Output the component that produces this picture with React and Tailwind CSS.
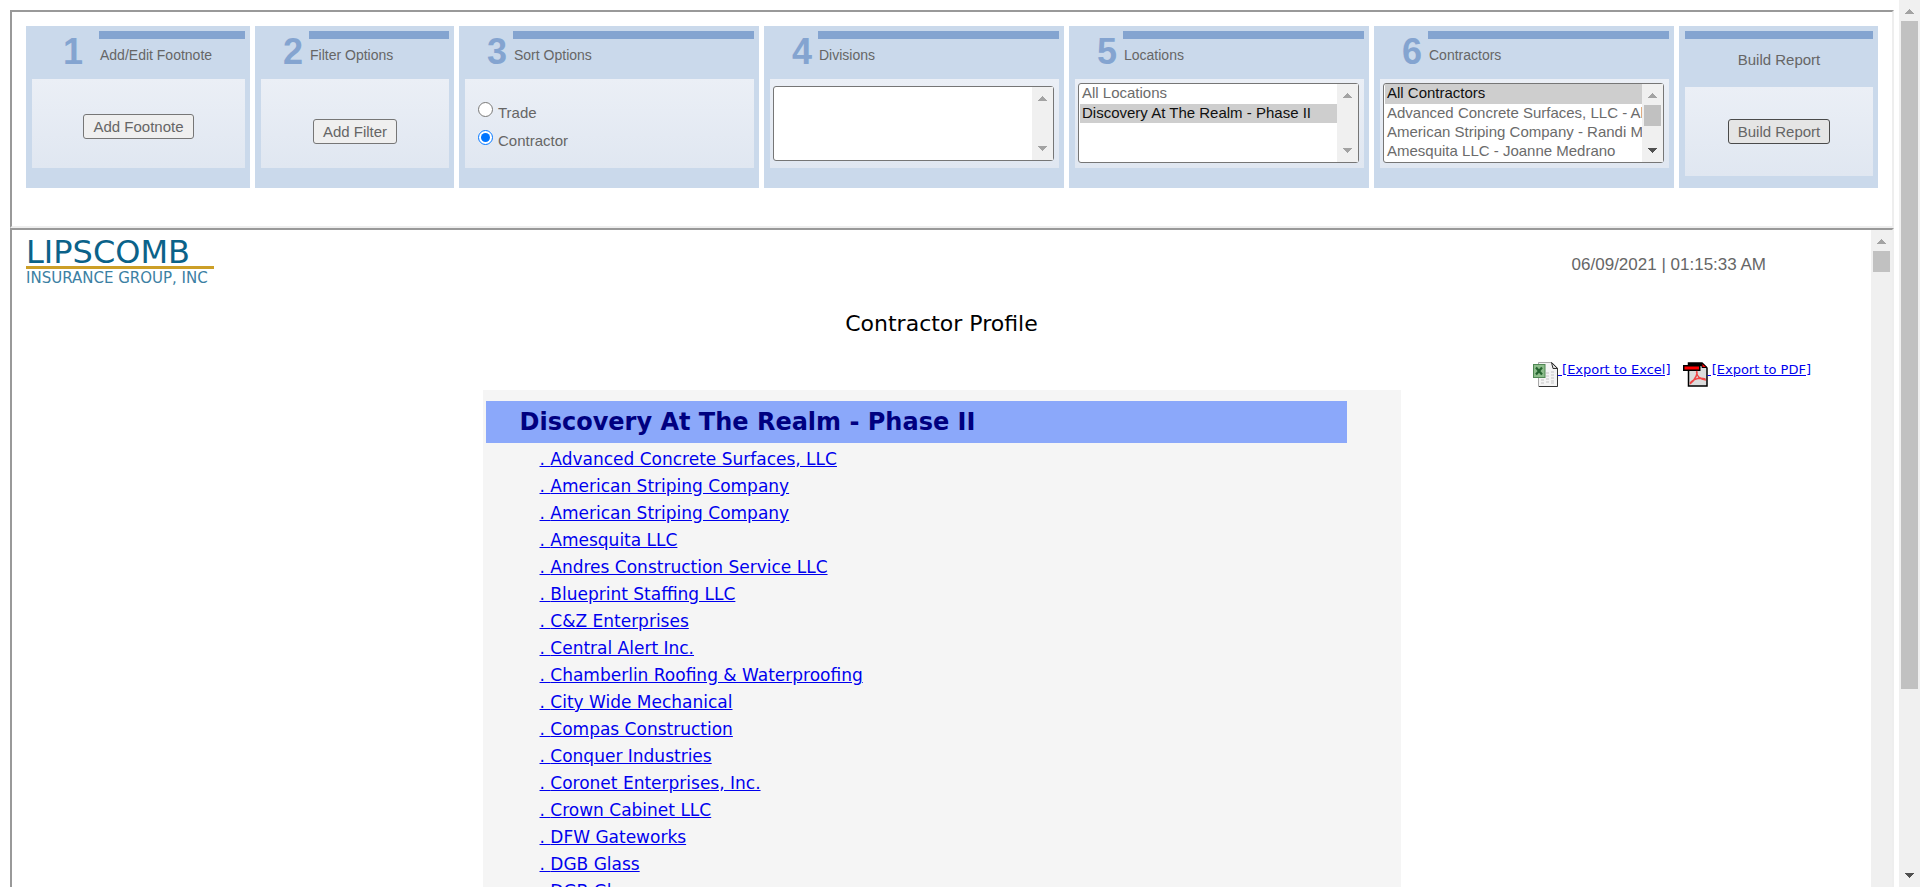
const contractors = [
  "Advanced Concrete Surfaces, LLC",
  "American Striping Company",
  "American Striping Company",
  "Amesquita LLC",
  "Andres Construction Service LLC",
  "Blueprint Staffing LLC",
  "C&Z Enterprises",
  "Central Alert Inc.",
  "Chamberlin Roofing & Waterproofing",
  "City Wide Mechanical",
  "Compas Construction",
  "Conquer Industries",
  "Coronet Enterprises, Inc.",
  "Crown Cabinet LLC",
  "DFW Gateworks",
  "DGB Glass",
  "DGB Glass",
];

function Arrow({ down, active }) {
  return (
    <svg
      width="9"
      height="5"
      viewBox="0 0 9 5"
      shapeRendering="crispEdges"
      className={active ? "text-[#505050]" : "text-[#a3a3a3]"}
      aria-hidden="true"
    >
      <path d={down ? "M0 0H9L4.5 5Z" : "M0 5H9L4.5 0Z"} fill="currentColor" />
    </svg>
  );
}

function ScrollTrack({ children, downActive, openEnd }) {
  return (
    <div className="flex w-[21px] shrink-0 flex-col items-center bg-[#f0f0f0] py-[9px]" aria-hidden="true">
      <Arrow />
      <div className="flex min-h-0 w-[17px] flex-1 flex-col py-[7px]">{children}</div>
      {!openEnd && <Arrow down active={downActive} />}
    </div>
  );
}

function Step({ number, title, wide, children }) {
  return (
    <section className="flex h-[162px] min-w-0 flex-col bg-[#cad9eb] pt-[5px] pr-[5px] pl-[6px]">
      <div className="flex h-[48px]">
        <div
          className={
            wide
              ? "w-[67px] shrink-0 pr-[16px] text-right text-[36px] leading-[42px] font-bold text-[#84a4d0]"
              : "w-[48px] shrink-0 pr-[6px] text-right text-[36px] leading-[42px] font-bold text-[#84a4d0]"
          }
        >
          {number}
        </div>
        <div className="min-w-0 flex-1">
          <div className="h-2 bg-[#84a4d0]" />
          <h2 className="truncate pt-[6px] pl-px text-[14px] leading-5">{title}</h2>
        </div>
      </div>
      <div className="h-[89px] bg-linear-to-b from-[#ebeff6] to-[#e0e7f1]">{children}</div>
    </section>
  );
}

function ListBox({ label, options, selected, height, thumb, downActive }) {
  return (
    <div className={`${height} flex rounded-[3px] border border-[#767676] bg-white`}>
      <select
        multiple
        size={4}
        aria-label={label}
        defaultValue={selected}
        className="h-full min-w-0 flex-1 overflow-hidden pl-px text-[15px] text-[#6b6b6b] outline-none [scrollbar-width:none]"
      >
        {options.map((o) => (
          <option key={o} value={o} className="h-[19px] px-[2px] leading-[19px] first:h-5">
            {o}
          </option>
        ))}
      </select>
      <ScrollTrack downActive={downActive}>{thumb}</ScrollTrack>
    </div>
  );
}

const buttonClass =
  "h-[25px] rounded-[3px] border border-[#767676] bg-[#efefef] px-[9px] text-[15px] leading-[23px] whitespace-nowrap text-[#666]";

function ExcelIcon() {
  return (
    <svg width="25" height="25" viewBox="0 0 25 25" className="shrink-0" aria-hidden="true">
      <path d="M5.5 .5H19L24.5 6V24.5H5.5Z" fill="#f4f4f4" stroke="#a8a8a8" />
      <path d="M24.5 6V24.5H6" fill="none" stroke="#333" />
      <path d="M18.5 .5 24.5 6.5H20Z" fill="#ddd" stroke="#333" />
      <path d="M8 18h3M8 21h3M13 11h3M13 14h3M13 17h3M13 20h3M18 10h3M18 13h3M18 16h3M18 19h3M18 21h3" stroke="#c4c4c4" />
      <rect x=".5" y="2.5" width="11.500" height="13" fill="#8dbd8b" stroke="#4f8753" />
      <path d="M3 5.500 9 12.500M9 5.500 3 12.500" stroke="#25642f" strokeWidth="2.200" />
    </svg>
  );
}

function PdfIcon() {
  return (
    <svg width="25" height="25" viewBox="0 0 25 25" className="shrink-0" aria-hidden="true">
      <path d="M5.500 1H19L24 6V24H5.500Z" fill="#dcdcdc" stroke="#000" strokeWidth="1.500" />
      <path d="M6 1H19V4H6Z" fill="#000" />
      <path d="M19 1 24 5.500H19Z" fill="#f00" stroke="#000" />
      <rect x=".75" y="3.750" width="16" height="4.500" fill="#f00" stroke="#000" strokeWidth="1.500" />
      <path
        d="M13.500 9C15 11 13 17 7 22M13.500 10C14 15 18 17.500 23 18M7 21C11 17 17 15.500 22.500 17"
        fill="none"
        stroke="#f04545"
        strokeWidth="1.500"
      />
    </svg>
  );
}

function Logo() {
  return (
    <div className="w-[188px]">
      <div className="text-[32px] leading-[22px] text-[#0b6289]">LIPSCOMB</div>
      <div className="mt-[3px] h-[3px] bg-[#cc9f27]" />
      <div className="text-[15px] leading-[18px] whitespace-nowrap text-[#3c80a3]">INSURANCE GROUP, INC</div>
    </div>
  );
}

export default function App() {
  return (
    <div className="flex h-screen overflow-hidden bg-white font-['Liberation_Sans',Arial,sans-serif] text-[#666]">
      <div className="flex min-w-0 flex-1 flex-col pt-[10px] pr-[5px] pl-[10px]">
        <div className="border-2 border-t-[#999] border-r-[#eee] border-b-[#eee] border-l-[#999] px-[14px] pt-[14px] pb-[38px]">
          <div className="grid grid-cols-[minmax(0,224fr)_minmax(0,199fr)_minmax(0,300fr)_minmax(0,300fr)_minmax(0,300fr)_minmax(0,300fr)_minmax(0,199fr)] gap-[5px]">
            <Step number="1" title="Add/Edit Footnote" wide>
              <div className="flex justify-center pt-[35px]">
                <button className={buttonClass}>Add Footnote</button>
              </div>
            </Step>
            <Step number="2" title="Filter Options">
              <div className="flex justify-center pt-[40px]">
                <button className={buttonClass}>Add Filter</button>
              </div>
            </Step>
            <Step number="3" title="Sort Options">
              <div className="flex flex-col gap-[6px] pt-[22px] pl-[13px] text-[15px] leading-5">
                <label className="flex items-start gap-[5px]">
                  <input type="radio" name="sort" className="mt-px size-[15px]" />
                  <span className="pt-[2px]">Trade</span>
                </label>
                <label className="flex items-start gap-[5px]">
                  <input type="radio" name="sort" defaultChecked className="mt-px size-[15px]" />
                  <span className="pt-[2px]">Contractor</span>
                </label>
              </div>
            </Step>
            <Step number="4" title="Divisions">
              <div className="pt-[7px] pr-[5px] pl-[3px]">
                <ListBox label="Divisions" options={[]} selected={[]} height="h-[75px]" />
              </div>
            </Step>
            <Step number="5" title="Locations">
              <div className="pt-1 pr-[5px] pl-[3px]">
                <ListBox
                  label="Locations"
                  options={["All Locations", "Discovery At The Realm - Phase II"]}
                  selected={["Discovery At The Realm - Phase II"]}
                  height="h-[80px]"
                />
              </div>
            </Step>
            <Step number="6" title="Contractors">
              <div className="pt-1 pr-[5px] pl-[3px]">
                <ListBox
                  label="Contractors"
                  options={[
                    "All Contractors",
                    "Advanced Concrete Surfaces, LLC - Al",
                    "American Striping Company - Randi M",
                    "Amesquita LLC - Joanne Medrano",
                  ]}
                  selected={["All Contractors"]}
                  height="h-[80px]"
                  downActive
                  thumb={<div className="h-[21px] bg-[#c1c1c1]" />}
                />
              </div>
            </Step>
            <section className="flex h-[162px] min-w-0 flex-col bg-[#cad9eb] pt-[5px] pr-[5px] pl-[6px]">
              <div className="h-2 bg-[#84a4d0]" />
              <h2 className="h-[48px] pt-[11px] text-center text-[15px] leading-5">Build Report</h2>
              <div className="flex h-[89px] justify-center bg-linear-to-b from-[#ebeff6] to-[#e0e7f1] pt-8">
                <button className="h-[25px] rounded-[3px] border border-[#4a4a4a] bg-[#e5e5e5] px-[9px] text-[15px] leading-[23px] whitespace-nowrap text-[#666]">
                  Build Report
                </button>
              </div>
            </section>
          </div>
        </div>

        <div className="flex min-h-0 flex-1 border-2 border-b-0 border-t-[#999] border-r-[#eee] border-l-[#999]">
          <main className="min-w-0 flex-1 overflow-hidden font-['DejaVu_Sans',Verdana,sans-serif]">
            <div className="flex h-[58px] justify-between pt-[11px] pr-[105px] pl-[14px]">
              <Logo />
              <div className="pt-[12px] font-['Liberation_Sans',Arial,sans-serif] text-[17px] leading-6">
                06/09/2021 | 01:15:33 AM
              </div>
            </div>
            <h1 className="mt-5 text-center text-[22px] leading-8 text-black">Contractor Profile</h1>
            <div className="mt-[22px] flex justify-end gap-[12px] pr-[60px] text-[13px] leading-[15px] text-[#0000ee]">
              <a href="#excel" className="flex items-start">
                <ExcelIcon />
                <span className="whitespace-pre underline"> [Export to Excel]</span>
              </a>
              <a href="#pdf" className="flex items-start">
                <PdfIcon />
                <span className="whitespace-pre underline"> [Export to PDF]</span>
              </a>
            </div>
            <div className="mx-auto mt-[3px] w-[918px] bg-[#f5f5f5] pt-[11px]">
              <h2 className="mr-[54px] ml-[3px] bg-[#8ba8fa] pl-[34px] text-[24px] leading-[42px] font-bold text-[#000080]">
                Discovery At The Realm - Phase II
              </h2>
              <ul className="pt-[3px] pl-[57px] text-[17px] leading-[27px]">
                {contractors.map((name, i) => (
                  <li key={i}>
                    <a href={`#contractor-${i}`} className="text-[#0000ee] underline">
                      . {name}
                    </a>
                  </li>
                ))}
              </ul>
            </div>
          </main>
          <ScrollTrack openEnd>
            <div className="h-[21px] bg-[#c1c1c1]" />
          </ScrollTrack>
        </div>
      </div>

      <ScrollTrack downActive>
        <div className="h-[79%] bg-[#c1c1c1]" />
      </ScrollTrack>
    </div>
  );
}
